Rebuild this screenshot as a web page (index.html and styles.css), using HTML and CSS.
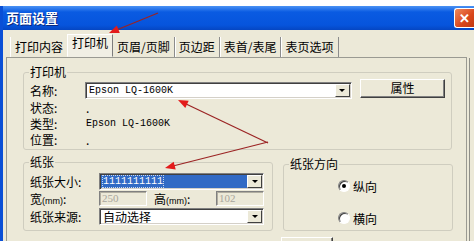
FILE: index.html
```html
<!DOCTYPE html>
<html lang="zh-CN">
  <head>
    <meta charset="UTF-8" />
    <title>页面设置</title>
    <link rel="stylesheet" href="styles.css">
  </head>
  <body>
    <div class="window">
      <div class="titlebar">
        <span class="title">页面设置</span>
        <span class="close">✕</span>
      </div>

      <div class="tabs">
        <span class="tab first">打印内容</span>
        <span class="tab active">打印机</span>
        <span class="tab after-active">页眉/页脚</span>
        <span class="tab">页边距</span>
        <span class="tab">表首/表尾</span>
        <span class="tab last">表页选项</span>
      </div>

      <div class="panel">
        <fieldset class="group printer">
          <legend>打印机</legend>
          <div class="row row-name">
            <span class="label">名称:</span>
            <div class="combo name-combo">
              <span class="combo-text mono">Epson LQ-1600K</span>
              <span class="drop"><i></i></span>
            </div>
            <button class="btn prop-btn">属性</button>
          </div>
          <div class="row row-info">
            <span class="label">状态:</span>
            <span class="value">.</span>
          </div>
          <div class="row row-info">
            <span class="label">类型:</span>
            <span class="value mono">Epson LQ-1600K</span>
          </div>
          <div class="row row-info">
            <span class="label">位置:</span>
            <span class="value">.</span>
          </div>
        </fieldset>

        <div class="lower">
          <fieldset class="group paper">
            <legend>纸张</legend>
            <div class="row row-combo">
              <span class="label wide-label">纸张大小:</span>
              <div class="combo paper-combo selected">
                <span class="combo-text mono"><span class="focus">1111111111</span></span>
                <span class="drop"><i></i></span>
              </div>
            </div>
            <div class="row row-size">
              <span class="label wide-label">宽<small>(mm)</small>:</span>
              <span class="field disabled">250</span>
              <span class="label height-label">高<small>(mm)</small>:</span>
              <span class="field disabled">102</span>
            </div>
            <div class="row row-combo">
              <span class="label wide-label">纸张来源:</span>
              <div class="combo paper-combo">
                <span class="combo-text">自动选择</span>
                <span class="drop"><i></i></span>
              </div>
            </div>
          </fieldset>

          <fieldset class="group orient">
            <legend>纸张方向</legend>
            <div class="radio-row first-radio">
              <span class="radio checked"></span>
              <span>纵向</span>
            </div>
            <div class="radio-row">
              <span class="radio"></span>
              <span>横向</span>
            </div>
          </fieldset>
        </div>

        <div class="bottom-row">
          <span class="btn ok-btn"></span>
        </div>
      </div>
    </div>

    <!-- 标注箭头 -->
    <svg class="arrows" width="474" height="241" viewBox="0 0 474 241">
      <line x1="158" y1="13" x2="114" y2="31" />
      <polygon points="109,33 116.8,25.5 119.8,32.9" />
      <line x1="268" y1="143" x2="184" y2="103" />
      <polygon points="178,100 188.7,100.7 185.3,107.9" />
      <line x1="268" y1="142" x2="171" y2="166.5" />
      <polygon points="165,168 173.7,161.7 175.7,169.4" />
    </svg>
  </body>
</html>
```

FILE: styles.css
```css
* {
  box-sizing: border-box;
}

body {
  margin: 0;
  background: #fff;
  font-family: "Noto Sans CJK SC", sans-serif;
  font-size: 12px;
  color: #000;
}

.window {
  width: 474px;
  height: 235px;
  margin-top: 6px;
  overflow: hidden;
  background-color: #ece9d8;
  border-left: 3px solid #0a4fd6;
}

.titlebar {
  display: flex;
  justify-content: space-between;
  align-items: flex-start;
  height: 24px;
  padding-left: 3px;
  background: linear-gradient(#4a92f4, #0a5be2 25%, #0654dc 80%, #0546c2);
}

.title {
  color: #fff;
  font-weight: bold;
  font-size: 13px;
  line-height: 23px;
  text-shadow: 1px 1px 0 #0a2a80;
}

.close {
  width: 20px;
  height: 20px;
  margin-top: 2px;
  border: 1px solid #fff;
  border-right: none;
  border-radius: 3px 0 0 3px;
  background: linear-gradient(135deg, #f08a5c, #d9461c 60%, #c23a12);
  color: #fff;
  font-weight: bold;
  font-size: 13px;
  line-height: 18px;
  text-align: center;
}

.tabs {
  display: flex;
  align-items: flex-end;
  height: 27px;
  padding-left: 7px;
}

.tab {
  height: 20px;
  line-height: 19px;
  padding: 0 4px;
  border-left: 1px solid #8c8c8c;
  box-shadow: inset 1px 0 0 #fff;
}

.tab.first {
  border-left: 1px solid #fff;
  box-shadow: none;
}

.tab.active {
  height: 23px;
  line-height: 16px;
  padding: 0 4px;
  border: 1px solid;
  border-color: #fff #7c7c7c transparent #fff;
  background-color: #f1efe4;
  box-shadow: none;
}

.tab.after-active {
  border-left: none;
  box-shadow: none;
}

.tab.last {
  border-right: 1px solid #8c8c8c;
}

.panel {
  width: 461px;
  height: 200px;
  margin-left: 3px;
  border: 1px solid #9a9a92;
  border-bottom: none;
  box-shadow: 3px 0 0 -1px #ece9d8, 4px 0 0 -1px #8f8f88;
}

.group {
  margin: 0;
  border: 1px solid #cfcdbf;
  border-radius: 3px;
  padding: 2px 6px 2px 6px;
  min-width: 0;
}

.group legend {
  padding: 0 1px;
  margin-left: -1px;
  line-height: 14px;
}

.printer {
  width: 429px;
  margin: 7px 0 0 16px;
}

.row {
  display: flex;
  align-items: center;
}

.label {
  width: 56px;
  flex-shrink: 0;
}

.row-name {
  height: 18px;
}

.row-info {
  height: 16px;
}

.mono {
  font-family: "Liberation Mono", monospace;
  font-size: 10px;
}

.combo {
  display: flex;
  height: 17px;
  background-color: #fff;
  border: 1px solid;
  border-color: #808080 #fff #fff #808080;
  box-shadow: inset 1px 1px 0 #404040, inset -1px -1px 0 #d4d0c8;
}

.combo-text {
  flex: 1;
  padding-left: 3px;
  line-height: 15px;
  white-space: nowrap;
  overflow: hidden;
}

.drop {
  width: 15px;
  margin: 1px 1px 1px 0;
  background-color: #ece9d8;
  border: 1px solid;
  border-color: #fff #404040 #404040 #fff;
  display: flex;
  align-items: center;
  justify-content: center;
}

.drop i {
  width: 0;
  height: 0;
  border-left: 3px solid transparent;
  border-right: 3px solid transparent;
  border-top: 3px solid #000;
}

.name-combo {
  width: 270px;
  margin-left: -1px;
}

.btn {
  background-color: #ece9d8;
  border: 1px solid;
  border-color: #fff #404040 #404040 #fff;
  box-shadow: inset -1px -1px 0 #808080;
  font-family: inherit;
  font-size: 12px;
  padding: 0;
}

.prop-btn {
  width: 86px;
  height: 19px;
  margin: -4px 0 0 8px;
  line-height: 16px;
}

.lower {
  display: flex;
  gap: 10px;
  margin: 5px 0 0 16px;
}

.paper {
  width: 250px;
  padding: 3px 6px 5px 6px;
}

.wide-label {
  width: 69px;
}

.row-combo {
  height: 18px;
}

.row-size {
  height: 17px;
}

.paper-combo {
  width: 165px;
}

.paper-combo.selected .combo-text {
  background-color: #316ac5;
  color: #fff;
  margin: 1px 0 1px 1px;
  padding-left: 2px;
  line-height: 13px;
}

.focus {
  outline: 1px dotted #c8d8f0;
}

small {
  font-size: 9px;
  font-family: "Liberation Sans", sans-serif;
}

.field {
  width: 48px;
  height: 15px;
  line-height: 13px;
  padding-left: 2px;
  border: 1px solid;
  border-color: #808080 #fff #fff #808080;
  box-shadow: inset 1px 1px 0 #b0ada0;
  font-family: "Liberation Serif", serif;
  font-size: 11px;
}

.field.disabled {
  color: #a8a69c;
  background-color: #ece9d8;
}

.height-label {
  width: 62px;
  margin-left: 7px;
}

.orient {
  width: 170px;
  margin-top: 2px;
  padding: 0 6px;
}

.radio-row {
  display: flex;
  align-items: center;
  gap: 3px;
  height: 14px;
  margin: 18px 0 0 48px;
}

.radio-row.first-radio {
  margin-top: 8px;
}

.radio {
  position: relative;
  width: 12px;
  height: 12px;
  border-radius: 50%;
  background-color: #fff;
  border: 1px solid;
  border-color: #808080 #fff #fff #808080;
  box-shadow: inset 1px 1px 0 #404040;
}

.radio.checked::after {
  content: "";
  position: absolute;
  left: 3px;
  top: 3px;
  width: 4px;
  height: 4px;
  border-radius: 50%;
  background-color: #000;
}

.bottom-row {
  padding: 6px 0 0 274px;
}

.ok-btn {
  display: block;
  width: 52px;
  height: 20px;
}

.arrows {
  position: absolute;
  top: 0;
  left: 0;
  pointer-events: none;
}

.arrows line {
  stroke: #9b2323;
  stroke-width: 1.2;
}

.arrows polygon {
  fill: #e31b1b;
}
```
